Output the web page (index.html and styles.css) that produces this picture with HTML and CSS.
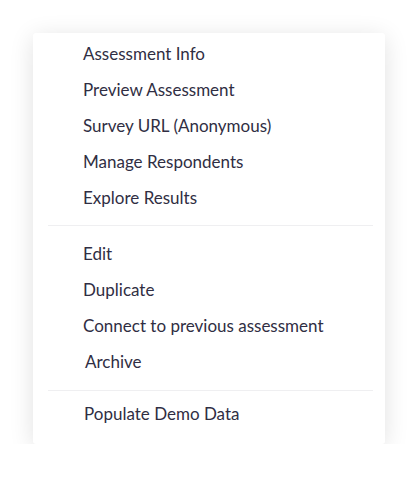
FILE: index.html
```html
<!DOCTYPE html>
<html>
<head>
<meta charset="utf-8">
<link rel="stylesheet" href="styles.css">
</head>
<body>
<div class="menu">
  <ul class="group group-first">
    <li class="item">Assessment Info</li>
    <li class="item">Preview Assessment</li>
    <li class="item">Survey URL (Anonymous)</li>
    <li class="item">Manage Respondents</li>
    <li class="item">Explore Results</li>
  </ul>
  <div class="divider"></div>
  <ul class="group group-mid">
    <li class="item">Edit</li>
    <li class="item">Duplicate</li>
    <li class="item">Connect to previous assessment</li>
    <li class="item item-shift">Archive</li>
  </ul>
  <div class="divider"></div>
  <ul class="group group-last">
    <li class="item item-shift-sm">Populate Demo Data</li>
  </ul>
</div>
</body>
</html>
```
FILE: styles.css
```css
html, body {
  margin: 0;
  padding: 0;
  background: #ffffff;
}
body {
  font-family: "Lato", "Liberation Sans", sans-serif;
  padding: 33px 0 0 33px;
}
.menu {
  width: 352px;
  height: 411px;
  box-sizing: border-box;
  background: #fff;
  border-radius: 3px;
  box-shadow: 0 4px 24px rgba(0, 0, 0, 0.12);
  padding-top: 3px;
}
.group {
  list-style: none;
  margin: 0;
  padding: 0;
}
.group-first { margin-bottom: 9px; }
.group-mid { margin-top: 10px; margin-bottom: 10px; }
.group-last { margin-top: 5px; }
.item {
  height: 36px;
  line-height: 36px;
  padding-left: 50px;
  font-size: 17px;
  color: #302e43;
  white-space: nowrap;
}
.item-shift { padding-left: 52px; }
.item-shift-sm { padding-left: 51px; }
.divider {
  height: 1px;
  background: #efeff1;
  margin: 0 12px 0 15px;
}
```
